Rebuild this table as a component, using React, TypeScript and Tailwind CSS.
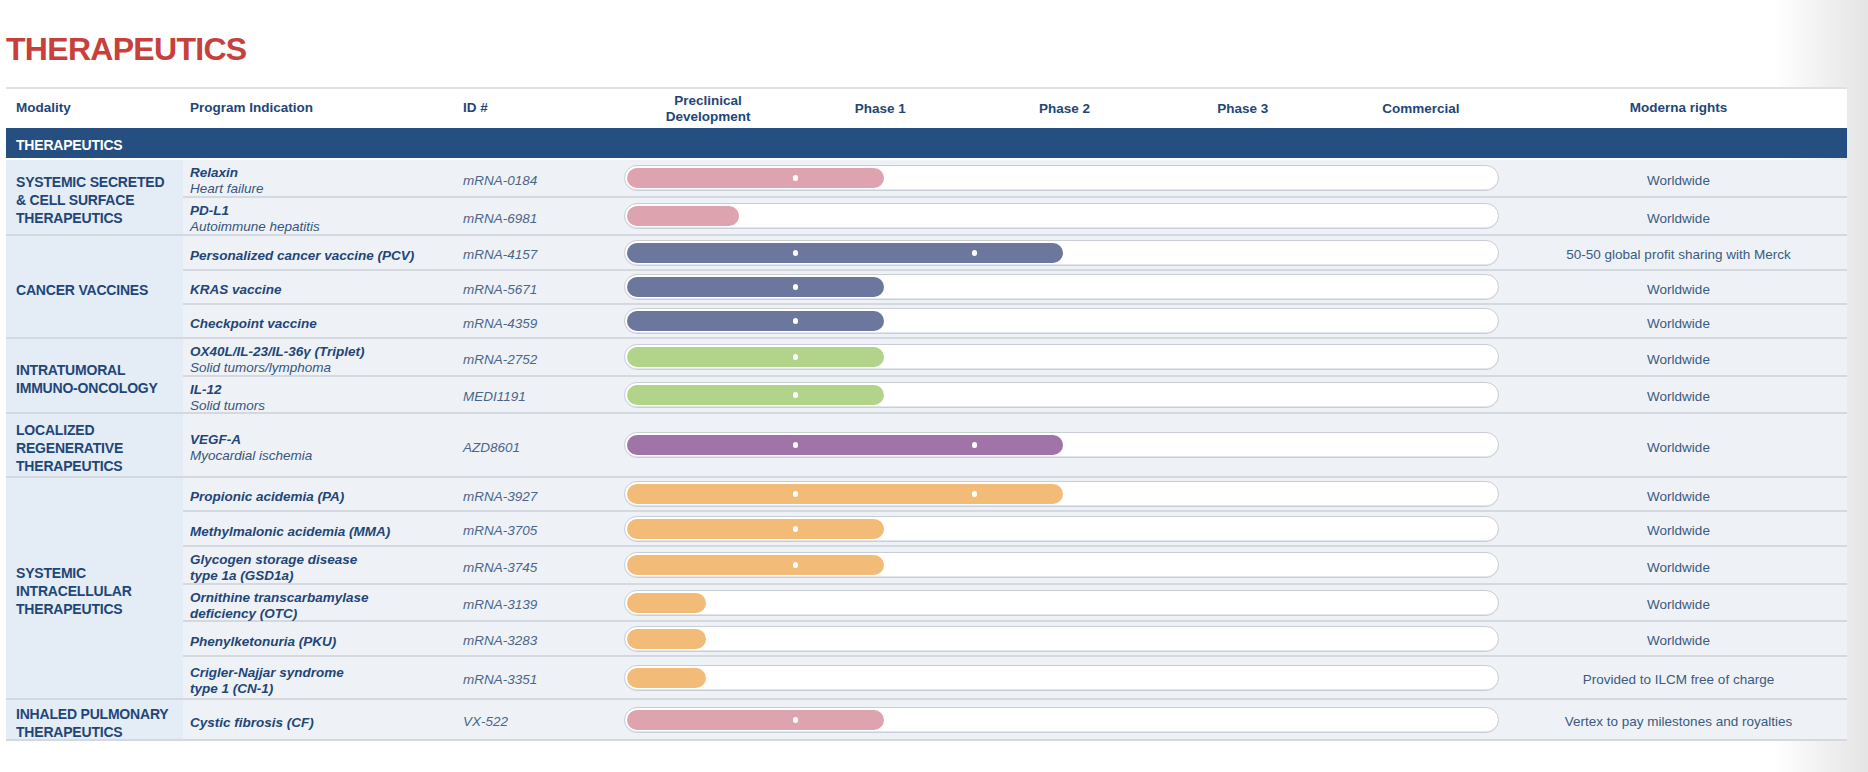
import React from "react";

type Len = "tiny" | "short" | "mid" | "long";
type Color = "pink" | "slate" | "green" | "purple" | "orange";

interface Row {
  name: string;
  sub?: string;
  name2?: string;
  id: string;
  color: Color;
  len: Len;
  rights: string;
  h: string;
}

interface Group {
  label: string[];
  rows: Row[];
}

const fillColor: Record<Color, string> = {
  pink: "bg-[#dda3ae]",
  slate: "bg-[#6b779d]",
  green: "bg-[#b2d38a]",
  purple: "bg-[#a073a9]",
  orange: "bg-[#f2bb78]",
};

const fillWidth: Record<Len, string> = {
  tiny: "w-[79px]",
  short: "w-[112px]",
  mid: "w-[257px]",
  long: "w-[436px]",
};

const groups: Group[] = [
  {
    label: ["SYSTEMIC SECRETED", "& CELL SURFACE", "THERAPEUTICS"],
    rows: [
      { name: "Relaxin", sub: "Heart failure", id: "mRNA-0184", color: "pink", len: "mid", rights: "Worldwide", h: "h-[38px]" },
      { name: "PD-L1", sub: "Autoimmune hepatitis", id: "mRNA-6981", color: "pink", len: "short", rights: "Worldwide", h: "h-[38px]" },
    ],
  },
  {
    label: ["CANCER VACCINES"],
    rows: [
      { name: "Personalized cancer vaccine (PCV)", id: "mRNA-4157", color: "slate", len: "long", rights: "50-50 global profit sharing with Merck", h: "h-[35px]" },
      { name: "KRAS vaccine", id: "mRNA-5671", color: "slate", len: "mid", rights: "Worldwide", h: "h-[34px]" },
      { name: "Checkpoint vaccine", id: "mRNA-4359", color: "slate", len: "mid", rights: "Worldwide", h: "h-[34px]" },
    ],
  },
  {
    label: ["INTRATUMORAL", "IMMUNO-ONCOLOGY"],
    rows: [
      { name: "OX40L/IL-23/IL-36γ (Triplet)", sub: "Solid tumors/lymphoma", id: "mRNA-2752", color: "green", len: "mid", rights: "Worldwide", h: "h-[38px]" },
      { name: "IL-12", sub: "Solid tumors", id: "MEDI1191", color: "green", len: "mid", rights: "Worldwide", h: "h-[37px]" },
    ],
  },
  {
    label: ["LOCALIZED", "REGENERATIVE", "THERAPEUTICS"],
    rows: [
      { name: "VEGF-A", sub: "Myocardial ischemia", id: "AZD8601", color: "purple", len: "long", rights: "Worldwide", h: "h-[64px]" },
    ],
  },
  {
    label: ["SYSTEMIC", "INTRACELLULAR", "THERAPEUTICS"],
    rows: [
      { name: "Propionic acidemia (PA)", id: "mRNA-3927", color: "orange", len: "long", rights: "Worldwide", h: "h-[34px]" },
      { name: "Methylmalonic acidemia (MMA)", id: "mRNA-3705", color: "orange", len: "mid", rights: "Worldwide", h: "h-[35px]" },
      { name: "Glycogen storage disease", name2: "type 1a (GSD1a)", id: "mRNA-3745", color: "orange", len: "mid", rights: "Worldwide", h: "h-[38px]" },
      { name: "Ornithine transcarbamylase", name2: "deficiency (OTC)", id: "mRNA-3139", color: "orange", len: "tiny", rights: "Worldwide", h: "h-[37px]" },
      { name: "Phenylketonuria (PKU)", id: "mRNA-3283", color: "orange", len: "tiny", rights: "Worldwide", h: "h-[35px]" },
      { name: "Crigler-Najjar syndrome", name2: "type 1 (CN-1)", id: "mRNA-3351", color: "orange", len: "tiny", rights: "Provided to ILCM free of charge", h: "h-[43px]" },
    ],
  },
  {
    label: ["INHALED PULMONARY", "THERAPEUTICS"],
    rows: [
      { name: "Cystic fibrosis (CF)", id: "VX-522", color: "pink", len: "mid", rights: "Vertex to pay milestones and royalties", h: "h-[41px]" },
    ],
  },
];

function Bar({ color, len }: { color: Color; len: Len }) {
  const dots = len === "long" ? 2 : len === "mid" ? 1 : 0;
  return (
    <div className="flex h-[26px] w-full items-center rounded-full border border-[#c9cdd5] bg-white px-[2px] shadow-[inset_0_-1px_0_#e3e6ea]">
      <div className={`relative h-[20px] rounded-full ${fillColor[color]} ${fillWidth[len]}`}>
        {dots >= 1 && (
          <span className="absolute left-[166px] top-1/2 h-[6px] w-[5px] -translate-y-1/2 rounded-full bg-white" />
        )}
        {dots >= 2 && (
          <span className="absolute left-[345px] top-1/2 h-[6px] w-[5px] -translate-y-1/2 rounded-full bg-white" />
        )}
      </div>
    </div>
  );
}

function DataRow({ row }: { row: Row }) {
  return (
    <div className={`flex items-center border-b-2 border-[#d4d9e0] ${row.h}`}>
      <div className="w-[272px] translate-y-[3px] pl-[7px] leading-[16px] text-[13.5px] text-[#1f4677]">
        <div className="font-bold italic">{row.name}</div>
        {row.name2 && <div className="font-bold italic">{row.name2}</div>}
        {row.sub && <div className="italic text-[#35557d]">{row.sub}</div>}
      </div>
      <div className="w-[164px] translate-y-[3px] pl-[8px] text-[13.5px] italic text-[#4a6689]">{row.id}</div>
      <div className="w-[891px] pl-[5px] pr-[11px]">
        <Bar color={row.color} len={row.len} />
      </div>
      <div className="w-[337px] translate-y-[3px] text-center text-[13.5px] text-[#3a5a80]">{row.rights}</div>
    </div>
  );
}

export default function App() {
  return (
    <div className="min-h-[772px] w-full bg-[linear-gradient(90deg,#ffffff_0%,#ffffff_95%,#e4e4e4_100%)] pl-[6px] pt-[33px] font-['Liberation_Sans',Arial,sans-serif]">
      <h1 className="text-[32px] font-bold leading-none tracking-[-0.7px] text-[#c8403c]">THERAPEUTICS</h1>

      <div className="mt-[22px] w-[1841px]">
        {/* Header */}
        <div className="flex h-[41px] items-center border-t-2 border-[#dde1e6] bg-white text-[13.5px] font-bold text-[#1f4677]">
          <div className="w-[177px] pl-[10px]">Modality</div>
          <div className="w-[272px] pl-[7px]">Program Indication</div>
          <div className="w-[164px] pl-[8px]">ID #</div>
          <div className="grid w-[891px] grid-cols-5 text-center leading-[16px]">
            <div>
              Preclinical
              <br />
              Development
            </div>
            <div className="self-center pr-[12px]">Phase 1</div>
            <div className="self-center">Phase 2</div>
            <div className="self-center">Phase 3</div>
            <div className="self-center">Commercial</div>
          </div>
          <div className="w-[337px] text-center">Moderna rights</div>
        </div>

        {/* Band */}
        <div className="flex h-[30px] items-center bg-[#244f80] pl-[10px] pt-[4px] text-[14px] font-bold tracking-[-0.2px] text-white">
          THERAPEUTICS
        </div>

        {/* Body */}
        <div className="mt-[2px]">
          {groups.map((g, gi) => (
            <div key={gi} className="flex">
              <div className="flex w-[177px] items-center border-b-2 border-[#d4d9e0] bg-[#e4ecf5] pl-[10px] text-[14px] font-bold leading-[18px] tracking-[-0.2px] text-[#1f4677]">
                <div className="translate-y-[3px]">
                  {g.label.map((l, li) => (
                    <div key={li}>{l}</div>
                  ))}
                </div>
              </div>
              <div className="flex w-[1664px] flex-col bg-[#eef2f7]">
                {g.rows.map((r, ri) => (
                  <DataRow key={ri} row={r} />
                ))}
              </div>
            </div>
          ))}
        </div>
      </div>
    </div>
  );
}
